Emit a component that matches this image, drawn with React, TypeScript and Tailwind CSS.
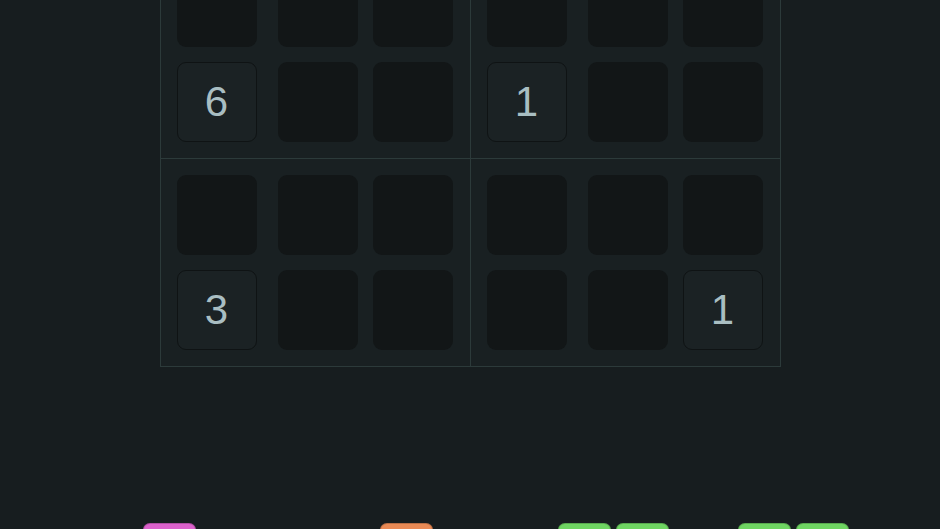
const QUADRANTS: (string | null)[][][] = [
  [
    [null, null, null],
    ['6', null, null],
  ],
  [
    [null, null, null],
    ['1', null, null],
  ],
  [
    [null, null, null],
    ['3', null, null],
  ],
  [
    [null, null, null],
    [null, null, '1'],
  ],
];

const colMargin = ['', 'ml-[21px]', 'ml-[15px]'];

const Cell = ({ value, col }: { value: string | null; col: number }) =>
  value ? (
    <div
      className={`${colMargin[col]} w-[80px] h-[80px] rounded-[9px] bg-[#1b2224] border border-[#0f1314] flex items-center justify-center text-[42px] leading-none text-[#a9bec2]`}
    >
      {value}
    </div>
  ) : (
    <div className={`${colMargin[col]} w-[80px] h-[80px] rounded-[9px] bg-[#121617]`} />
  );

const Tile = ({ color, className = '' }: { color: string; className?: string }) => (
  <div
    className={`${className} w-[53px] h-[53px] rounded-[7px] border border-black/20 ${color}`}
  />
);

const App = () => {
  return (
    <div
      className="w-[940px] h-[529px] overflow-hidden bg-[#171d1f] flex flex-col items-center"
      style={{ fontFamily: '"Liberation Sans", Arial, sans-serif' }}
    >
      <div className="mt-[-50px] grid grid-cols-2 border-l border-t border-[#2c3a3a] bg-[#192022]">
        {QUADRANTS.map((rows, q) => (
          <div
            key={q}
            className="border-r border-b border-[#2c3a3a] pl-4 pr-[17px] py-4 flex flex-col gap-[15px]"
          >
            {rows.map((row, r) => (
              <div key={r} className="flex">
                {row.map((v, c) => (
                  <Cell key={c} value={v} col={c} />
                ))}
              </div>
            ))}
          </div>
        ))}
      </div>

      <div className="w-full mt-[156px] flex">
        <Tile color="bg-[#dc62cc]" className="ml-[143px]" />
        <Tile color="bg-[#e98a55]" className="ml-[184px]" />
        <div className="ml-[125px] flex gap-[5px]">
          <Tile color="bg-[#6fd562]" />
          <Tile color="bg-[#6fd562]" />
        </div>
        <div className="ml-[69px] flex gap-[5px]">
          <Tile color="bg-[#6fd562]" />
          <Tile color="bg-[#6fd562]" />
        </div>
      </div>
    </div>
  );
};

export default App;
